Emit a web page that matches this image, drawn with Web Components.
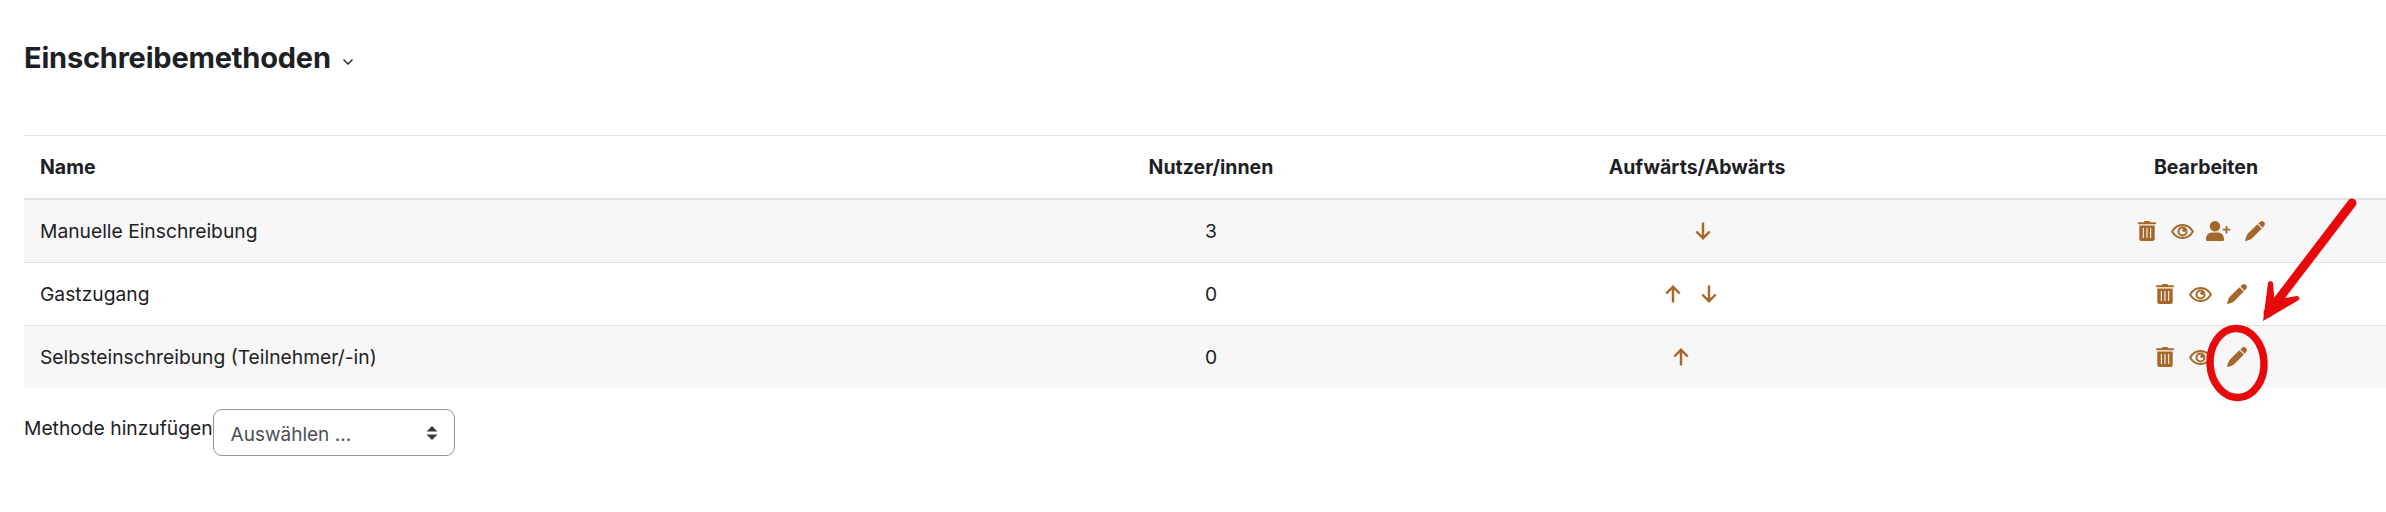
<!DOCTYPE html>
<html lang="de"><head><meta charset="utf-8"><title>Einschreibemethoden</title>
<style>html,body{margin:0;background:#fff}body{font-family:Inter,"Liberation Sans",sans-serif;color:#1d2125}</style>
</head><body>
<enrol-page>
  <page-heading>Einschreibemethoden</page-heading>
  <enrol-table>
    <enrol-row head><span>Name</span><span>Nutzer/innen</span><span>Aufwärts/Abwärts</span><span>Bearbeiten</span></enrol-row>
    <enrol-row shaded><span>Manuelle Einschreibung</span><span>3</span>
      <span><arrow-set spacer-before="24"><m-icon name="down"></m-icon></arrow-set></span>
      <span><icon-set><m-icon name="trash"></m-icon><m-icon name="eye"></m-icon><m-icon name="user"></m-icon><m-icon name="pencil"></m-icon></icon-set></span></enrol-row>
    <enrol-row><span>Gastzugang</span><span>0</span>
      <span><arrow-set><m-icon name="up"></m-icon><m-icon name="down"></m-icon></arrow-set></span>
      <span><icon-set><m-icon name="trash"></m-icon><m-icon name="eye"></m-icon><m-icon name="pencil"></m-icon></icon-set></span></enrol-row>
    <enrol-row shaded><span>Selbsteinschreibung (Teilnehmer/-in)</span><span>0</span>
      <span><arrow-set spacer-after="20"><m-icon name="up"></m-icon></arrow-set></span>
      <span><icon-set><m-icon name="trash"></m-icon><m-icon name="eye"></m-icon><m-icon name="pencil"></m-icon></icon-set></span></enrol-row>
  </enrol-table>
  <add-method label="Methode hinzufügen" value="Auswählen ..."></add-method>
  <red-annotation></red-annotation>
</enrol-page>
<script>
const def=(n,html)=>{customElements.define(n,class extends HTMLElement{
  constructor(){super();this.attachShadow({mode:'open'}).innerHTML=typeof html==='function'?html(this):html;}
});};
def('enrol-page',`<style>:host{display:block;position:relative;width:2386px;height:512px;overflow:hidden;padding:40px 0 0 24px;box-sizing:border-box}</style><slot></slot>`);
def('page-heading',`<style>:host{display:flex;align-items:center;height:36px;font-weight:700;font-size:29px;line-height:36px;letter-spacing:-.2px;color:#1d2125}
svg{margin:7px 0 0 11px;width:12px;height:8px}</style><slot></slot><svg viewBox="0 0 12 8"><path d="M1.500 1.500 6 6l4.500-4.500" fill="none" stroke="#1d2125" stroke-width="1.400"/></svg>`);
def('enrol-table',`<style>:host{display:block;margin-top:59px;border-top:1px solid #dee2e6}</style><slot></slot>`);
def('enrol-row',`<style>:host{display:grid;grid-template-columns:1030px 314px 658px 360px;align-items:center;height:62px;border-bottom:1px solid #dee2e6;box-sizing:content-box;font-size:19.25px;line-height:28px;color:#1d2125}
:host([head]){font-weight:700;font-size:19.5px;border-bottom-width:2px;height:62px}
:host([shaded]){background:#f7f7f7}
:host(:last-child){border-bottom:0}
::slotted(span){display:flex;justify-content:center;align-items:center}
::slotted(span:first-child){justify-content:flex-start;padding-left:16px}</style><slot></slot>`);
def('icon-set',`<style>:host{display:flex;padding-right:11px}</style><slot></slot>`);
def('arrow-set',el=>{
  const b=el.getAttribute('spacer-before')||0,a=el.getAttribute('spacer-after')||0;
  return `<style>:host{display:flex;padding-right:12px}i{display:block}</style><i style="width:${b}px"></i><slot></slot><i style="width:${a}px"></i>`;});
const C='#a5672a';
const ICONS={
 trash:`<svg width="18" height="20" viewBox="0 0 18 20"><path fill="${C}" d="M6.500 0h5l.7 1.300H17c.6 0 1 .4 1 1s-.4 1-1 1H1c-.6 0-1-.4-1-1s.4-1 1-1h4.800zM1.300 4.400h15.400V18c0 1.100-.9 2-2 2H3.300c-1.100 0-2-.9-2-2z"/><path d="M5.400 7v10M9 7v10M12.600 7v10" stroke="#fff" stroke-opacity=".85" stroke-width="1.200" fill="none"/></svg>`,
 eye:`<svg width="23" height="15" viewBox="0 0 23 15"><path d="M11.500 1C7 1 3.200 3.800 1.100 7.500 3.200 11.200 7 14 11.500 14s8.300-2.800 10.400-6.500C19.800 3.800 16 1 11.500 1z" fill="none" stroke="${C}" stroke-width="1.900"/><circle cx="11.500" cy="7.500" r="4" fill="none" stroke="${C}" stroke-width="2"/><circle cx="13" cy="6.200" r="1.700" fill="${C}"/></svg>`,
 user:`<svg width="25" height="20" viewBox="0 0 25 20"><circle cx="9" cy="5.200" r="5.200" fill="${C}"/><path fill="${C}" d="M5.800 11.600h6.400c3.500 0 5.800 3 5.800 6.800 0 .9-.7 1.600-1.600 1.600H1.600C.7 20 0 19.300 0 18.400c0-3.800 2.300-6.800 5.800-6.800z"/><path d="M20.500 5v7.500M16.700 8.700h7.600" stroke="${C}" stroke-width="1.800" fill="none"/></svg>`,
 pencil:`<svg width="20" height="20" viewBox="0 0 20 20"><path fill="${C}" d="M15 .9c1.100-1.100 2.800-1.100 3.900 0l.2.2c1.100 1.100 1.100 2.800 0 3.900L17.600 6.700 13.300 2.500zM12.400 3.300l4.400 4.300L7.400 17c-.8.800-1.700 1.400-2.800 1.700L.9 19.900c-.5.100-.9-.3-.8-.8l1.300-3.800c.3-1.100.8-2 1.600-2.800z"/></svg>`,
 up:`<svg width="16" height="18" viewBox="0 0 16 18"><path d="M8 17.500V1.800M1.300 8.500 8 1.800 14.700 8.500" fill="none" stroke="${C}" stroke-width="2.400"/></svg>`,
 down:`<svg width="16" height="18" viewBox="0 0 16 18"><path d="M8 .5v15.700M1.300 9.500 8 16.200 14.700 9.500" fill="none" stroke="${C}" stroke-width="2.400"/></svg>`
};
def('m-icon',el=>`<style>:host{display:flex;width:36px;height:24px;justify-content:center;align-items:center}svg{display:block}</style>${ICONS[el.getAttribute('name')]}`);
def('add-method',el=>`<style>:host{display:flex;margin-top:21px;align-items:flex-start;font-size:19.25px;line-height:28px;color:#1d2125}
.sel{width:242px;height:47px;box-sizing:border-box;border:1px solid #8f959e;border-radius:9px;background:#fff;display:flex;align-items:center;justify-content:space-between;padding:0 16px 0 17px;color:#495057}
.v{font-size:19px;padding-top:4px}.l{padding-top:5px}svg{display:block}</style><span class="l">${el.getAttribute('label')}</span><div class="sel"><span class="v">${el.getAttribute('value')}</span><svg width="12" height="14" viewBox="0 0 12 14"><path d="M6 0l5.500 5.500H.5zM6 14 .5 8.500h11z" fill="#343a40"/></svg></div>`);
def('red-annotation',`<style>:host{position:absolute;inset:0;pointer-events:none}svg{position:absolute;left:0;top:0}</style>
<svg width="2386" height="512" viewBox="0 0 2386 512"><ellipse cx="2237" cy="363" rx="27" ry="34.500" fill="none" stroke="#e80a0a" stroke-width="7.500" transform="rotate(-3 2237 363)"/>
<path d="M2352 203 2268 313" stroke="#e80a0a" stroke-width="9" stroke-linecap="round" fill="none"/>
<path d="M2263 321 2268 283c.3-2.500 4.700-2.500 5 0l1.500 17 22-4c2.500-.5 4 3 1.500 4.500z" fill="#e80a0a"/></svg>`);
</script>
</body></html>
